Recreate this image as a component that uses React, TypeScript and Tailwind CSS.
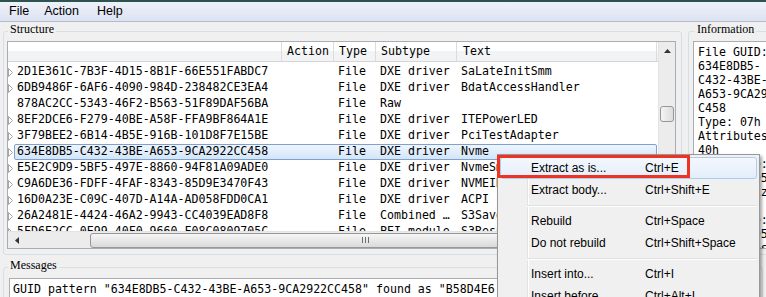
import clsx from 'clsx'

type Row = { guid: string; sub: string; text: string; arrow: boolean; selected?: boolean }

const rows: Row[] = [
  { guid: '2D1E361C-7B3F-4D15-8B1F-66E551FABDC7', sub: 'DXE driver', text: 'SaLateInitSmm', arrow: true },
  { guid: '6DB9486F-6AF6-4090-984D-238482CE3EA4', sub: 'DXE driver', text: 'BdatAccessHandler', arrow: true },
  { guid: '878AC2CC-5343-46F2-B563-51F89DAF56BA', sub: 'Raw', text: '', arrow: false },
  { guid: '8EF2DCE6-F279-40BE-A58F-FFA9BF864A1E', sub: 'DXE driver', text: 'ITEPowerLED', arrow: true },
  { guid: '3F79BEE2-6B14-4B5E-916B-101D8F7E15BE', sub: 'DXE driver', text: 'PciTestAdapter', arrow: true },
  { guid: '634E8DB5-C432-43BE-A653-9CA2922CC458', sub: 'DXE driver', text: 'Nvme', arrow: true, selected: true },
  { guid: 'E5E2C9D9-5BF5-497E-8860-94F81A09ADE0', sub: 'DXE driver', text: 'NvmeSmm', arrow: true },
  { guid: 'C9A6DE36-FDFF-4FAF-8343-85D9E3470F43', sub: 'DXE driver', text: 'NVMEINT13', arrow: true },
  { guid: '16D0A23E-C09C-407D-A14A-AD058FDD0CA1', sub: 'DXE driver', text: 'ACPI', arrow: true },
  { guid: '26A2481E-4424-46A2-9943-CC4039EAD8F8', sub: 'Combined …', text: 'S3Save', arrow: true },
  { guid: '5FD6E2CC-0E99-40F0-9660-F08C0809705C', sub: 'PEI module', text: 'S3Resume', arrow: true },
]

const info = [
  'File GUID:', '634E8DB5-', 'C432-43BE-', 'A653-9CA2922C', 'C458', 'Type: 07h', 'Attributes:', '40h',
  'Full size:', '4C6Ch (19564)', 'Header size:', '18h (24)', 'Body size:', '4C54h (19540)', 'Tail: present', 'State: F8h',
]

type Item = { label: string; keys: string; hot?: boolean } | 'sep'

const menu: Item[] = [
  { label: 'Extract as is...', keys: 'Ctrl+E', hot: true },
  { label: 'Extract body...', keys: 'Ctrl+Shift+E' },
  'sep',
  { label: 'Rebuild', keys: 'Ctrl+Space' },
  { label: 'Do not rebuild', keys: 'Ctrl+Shift+Space' },
  'sep',
  { label: 'Insert into...', keys: 'Ctrl+I' },
  { label: 'Insert before...', keys: 'Ctrl+Alt+I' },
  { label: 'Insert after...', keys: 'Ctrl+Shift+I' },
]

const mono = "font-['DejaVu_Sans_Mono',monospace] text-[11.6px]"
const label = "w-fit bg-[#f0f0f0] px-[2px] font-['Liberation_Serif',serif] text-[12px] leading-[14px] text-black"

function TreeArrow() {
  return (
    <svg width="6" height="9" viewBox="0 0 6 9" className="block">
      <path d="M0.5 0.5 L4.5 4.5 L0.5 8.5 Z" fill="#fff" stroke="#a5a5a5" />
    </svg>
  )
}

function StructureTree() {
  return (
    <div className="ml-[3px] mt-[5px] flex h-[208px] w-[669px] flex-col border border-[#abadb3] bg-white">
      <div className="flex h-[189px]">
        <div className={clsx('w-[650px] overflow-hidden', mono)}>
          <div className="flex h-[20px] items-center border-b border-[#d5d5d5] bg-[linear-gradient(#ffffff_0%,#ffffff_45%,#f2f3f5_45%,#f2f3f5_100%)]">
            <div className="h-full w-[274px] border-r border-[#dcdcdc]" />
            <div className="flex h-full w-[52px] items-center border-r border-[#dcdcdc] pl-[5px]">Action</div>
            <div className="flex h-full w-[42px] items-center border-r border-[#dcdcdc] pl-[5px]">Type</div>
            <div className="flex h-full w-[81px] items-center border-r border-[#dcdcdc] pl-[5px]">Subtype</div>
            <div className="flex h-full w-[200px] items-center border-r border-[#dcdcdc] pl-[6px]">Text</div>
          </div>
          <div className="pt-[2px]">
            {rows.map(r => (
              <div key={r.guid} className="flex h-[16px] items-center whitespace-nowrap">
                <div className="w-[6px]">{r.arrow && <TreeArrow />}</div>
                <div
                  className={clsx(
                    'mr-[1px] flex h-[16px] flex-1 items-center rounded-[2px] border',
                    r.selected ? 'border-[#7da2ce] bg-[linear-gradient(#eef5fd,#d3e5fa)]' : 'border-transparent',
                  )}
                >
                  <div className="w-[267px] pl-[2px]">{r.guid}</div>
                  <div className="w-[52px]" />
                  <div className="w-[42px] pl-[4px]">File</div>
                  <div className="w-[81px] pl-[4px]">{r.sub}</div>
                  <div className="pl-[4px]">{r.text}</div>
                </div>
              </div>
            ))}
          </div>
        </div>
        <div className="flex w-[17px] flex-col border-l border-[#e3e3e3] bg-[#ececec]">
          <div className="flex h-[17px] items-center justify-center">
            <svg width="7" height="4" viewBox="0 0 7 4"><path d="M0 4 L3.5 0 L7 4 Z" fill="#333" /></svg>
          </div>
          <div className="mx-[1px] mt-[47px] h-[16px] rounded-[3px] border border-[#979797] bg-[linear-gradient(to_right,#f5f5f5,#dcdcdc)]" />
        </div>
      </div>
      <div className="flex h-[17px] border-t border-[#e3e3e3]">
        <div className="flex w-[650px] items-center bg-[#ececec]">
          <div className="flex h-full w-[17px] items-center justify-center">
            <svg width="4" height="7" viewBox="0 0 4 7"><path d="M4 0 L0 3.5 L4 7 Z" fill="#333" /></svg>
          </div>
          <div className="ml-[65px] flex h-[15px] w-[550px] items-center justify-center gap-[2px] rounded-[3px] border border-[#979797] bg-[linear-gradient(#f6f6f6,#dadada)]">
            <div className="h-[6px] w-[1px] bg-[#6d6d6d]" />
            <div className="h-[6px] w-[1px] bg-[#6d6d6d]" />
            <div className="h-[6px] w-[1px] bg-[#6d6d6d]" />
          </div>
        </div>
        <div className="w-[17px] bg-[#f0f0f0]" />
      </div>
    </div>
  )
}

function ContextMenu() {
  return (
    <div className="absolute left-[497px] top-[154px] w-[263px] border border-[#979797] bg-[linear-gradient(to_right,#f0f0f0_29px,#e2e3e3_29px,#e2e3e3_30px,#ffffff_30px,#ffffff_31px,#f0f0f0_31px)] pt-[2px] pb-[2px] font-['Liberation_Sans',sans-serif] text-[12px] text-black shadow-[2px_2px_3px_rgba(0,0,0,0.35)]">
      {menu.map((it, i) =>
        it === 'sep' ? (
          <div key={i} className="flex h-[9px] items-center pl-[29px] pr-[2px]">
            <div className="h-[2px] w-full border-t border-b border-t-[#e0e0e0] border-b-white" />
          </div>
        ) : (
          <div
            key={i}
            className={clsx(
              'mx-[2px] flex h-[22px] items-center whitespace-nowrap rounded-[3px] border',
              it.hot ? 'border-[#aeccf1] bg-[linear-gradient(#f4f8fd,#e3eefb)]' : 'border-transparent',
            )}
          >
            <div className="w-[144px] pl-[30px]">{it.label}</div>
            <div>{it.keys}</div>
          </div>
        ),
      )}
    </div>
  )
}

export default function App() {
  return (
    <div className="relative h-[297px] w-[766px] overflow-hidden bg-[#f0f0f0]">
      <div className="h-[2px] bg-[#2f534e]" />
      <div className="flex h-[20px] items-center border-b border-[#b4bccb] bg-[linear-gradient(#eef2fa,#dbe2f1)] font-['Liberation_Sans',sans-serif] text-[12.5px] text-black">
        <span className="ml-[9px]">File</span>
        <span className="ml-[15px]">Action</span>
        <span className="ml-[18px]">Help</span>
      </div>

      <div className="flex pl-[3px]">
        <div className="mt-[9px] h-[224px] w-[679px] shrink-0 rounded-[3px] border border-[#d5dfe5]">
          <div className={clsx(label, '-mt-[10px] ml-[4px]')}>Structure</div>
          <StructureTree />
        </div>
        <div className="ml-[6px] mt-[9px] h-[224px] w-[90px] shrink-0 rounded-[3px] border border-[#d5dfe5]">
          <div className={clsx(label, '-mt-[10px] ml-[6px]')}>Information</div>
          <div className={clsx('ml-[4px] mt-[5px] h-[208px] w-[110px] overflow-hidden border border-[#abadb3] bg-white pl-[4px] pt-[3px] leading-[14px] whitespace-nowrap', mono)}>
            {info.map((l, i) => (
              <div key={i}>{l}</div>
            ))}
          </div>
        </div>
      </div>

      <div className="ml-[3px] mt-[12px] h-[60px] w-[760px] rounded-[3px] border border-[#d5dfe5]">
        <div className={clsx(label, '-mt-[10px] ml-[4px]')}>Messages</div>
        <div className={clsx('ml-[5px] mt-[6px] h-[60px] w-[748px] border border-[#abadb3] bg-white pl-[3px] pt-[2px] leading-[16px] whitespace-nowrap', mono)}>
          GUID pattern "634E8DB5-C432-43BE-A653-9CA2922CC458" found as "B58D4E6
        </div>
      </div>

      <ContextMenu />
      <div className="absolute left-[497px] top-[155px] h-[23px] w-[193px] border-[3px] border-[#ee3322]" />
    </div>
  )
}
